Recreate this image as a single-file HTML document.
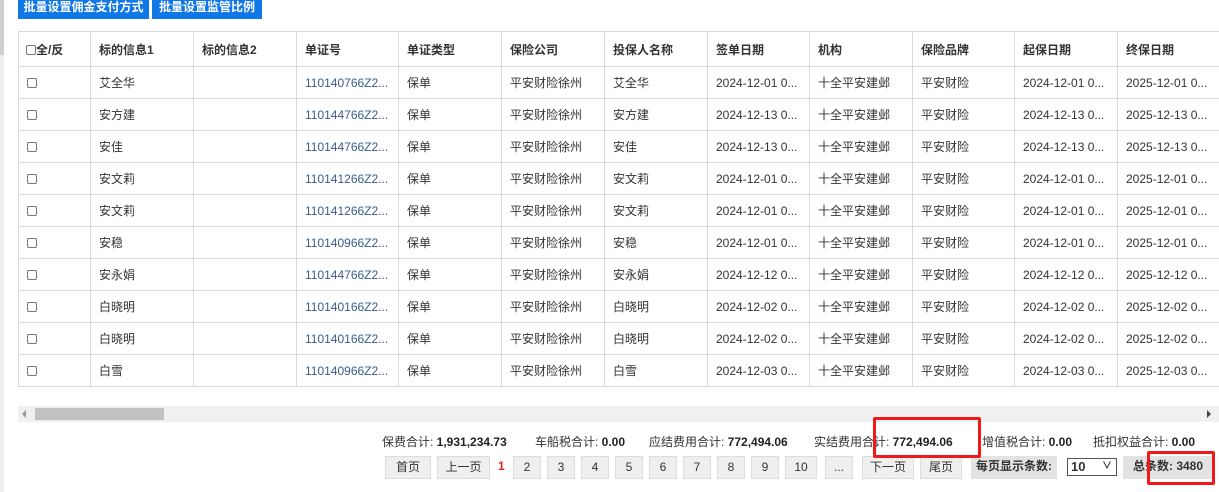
<!DOCTYPE html>
<html><head><meta charset="utf-8"><style>
*{box-sizing:border-box;margin:0;padding:0}
body{width:1219px;height:492px;overflow:hidden;background:#fff;font-family:"Liberation Sans","Noto Sans CJK SC",sans-serif;font-size:12px;color:#333;position:relative}
.lbar{position:absolute;left:0;top:0;width:4px;height:492px;background:#efefef}
.lbar2{position:absolute;left:0;top:0;width:4px;height:55px;background:#d0d0d0}
.btn{position:absolute;top:0;height:19px;background:#1177e6;color:#fff;font-size:12px;font-weight:bold;line-height:14px;text-align:center}
table{position:absolute;left:18px;top:31px;border-collapse:collapse;table-layout:fixed;width:1240px}
td,th{border:1px solid #d9d9d9;height:32px;padding:0 8px;white-space:nowrap;overflow:hidden;text-align:left;font-size:12px}
th{height:35px;font-weight:bold;color:#333}
td{color:#333}
td.l{color:#3a5a8c}
.cb{display:inline-block;width:10px;height:10px;border:1px solid #777;border-radius:2px;vertical-align:middle}
.sb{position:absolute;left:18px;top:406px;width:1201px;height:16px;background:#f0f0f0}
.th{position:absolute;left:35px;top:408px;width:129px;height:12px;background:#c1c1c1}
.sum{position:absolute;top:433px;font-size:12px;white-space:nowrap}
.sum b{color:#222}
.pb{position:absolute;top:456px;height:23px;background:#efefef;border:1px solid #ddd;font-size:12px;line-height:21px;text-align:center;color:#333}
.red{position:absolute;border:3px solid #f01818;border-radius:2px}
</style></head><body>
<div class="lbar"></div><div class="lbar2"></div>
<div class="btn" style="left:18px;width:131px">批量设置佣金支付方式</div>
<div class="btn" style="left:152px;width:110px">批量设置监管比例</div>
<table>
<colgroup><col style="width:72px"><col style="width:103px"><col style="width:103px"><col style="width:102px"><col style="width:103px"><col style="width:103px"><col style="width:103px"><col style="width:102px"><col style="width:103px"><col style="width:102px"><col style="width:103px"><col style="width:141px"></colgroup>
<tr><th style="padding:0 0 0 7px"><span class="cb"></span>全/反</th><th>标的信息1</th><th>标的信息2</th><th>单证号</th><th>单证类型</th><th>保险公司</th><th>投保人名称</th><th>签单日期</th><th>机构</th><th>保险品牌</th><th>起保日期</th><th>终保日期</th></tr>
<tr><td><span class="cb"></span></td><td>艾全华</td><td></td><td class="l">110140766Z2...</td><td>保单</td><td>平安财险徐州</td><td>艾全华</td><td>2024-12-01 0...</td><td>十全平安建邺</td><td>平安财险</td><td>2024-12-01 0...</td><td>2025-12-01 0...</td></tr>
<tr><td><span class="cb"></span></td><td>安方建</td><td></td><td class="l">110144766Z2...</td><td>保单</td><td>平安财险徐州</td><td>安方建</td><td>2024-12-13 0...</td><td>十全平安建邺</td><td>平安财险</td><td>2024-12-13 0...</td><td>2025-12-13 0...</td></tr>
<tr><td><span class="cb"></span></td><td>安佳</td><td></td><td class="l">110144766Z2...</td><td>保单</td><td>平安财险徐州</td><td>安佳</td><td>2024-12-13 0...</td><td>十全平安建邺</td><td>平安财险</td><td>2024-12-13 0...</td><td>2025-12-13 0...</td></tr>
<tr><td><span class="cb"></span></td><td>安文莉</td><td></td><td class="l">110141266Z2...</td><td>保单</td><td>平安财险徐州</td><td>安文莉</td><td>2024-12-01 0...</td><td>十全平安建邺</td><td>平安财险</td><td>2024-12-01 0...</td><td>2025-12-01 0...</td></tr>
<tr><td><span class="cb"></span></td><td>安文莉</td><td></td><td class="l">110141266Z2...</td><td>保单</td><td>平安财险徐州</td><td>安文莉</td><td>2024-12-01 0...</td><td>十全平安建邺</td><td>平安财险</td><td>2024-12-01 0...</td><td>2025-12-01 0...</td></tr>
<tr><td><span class="cb"></span></td><td>安稳</td><td></td><td class="l">110140966Z2...</td><td>保单</td><td>平安财险徐州</td><td>安稳</td><td>2024-12-01 0...</td><td>十全平安建邺</td><td>平安财险</td><td>2024-12-01 0...</td><td>2025-12-01 0...</td></tr>
<tr><td><span class="cb"></span></td><td>安永娟</td><td></td><td class="l">110144766Z2...</td><td>保单</td><td>平安财险徐州</td><td>安永娟</td><td>2024-12-12 0...</td><td>十全平安建邺</td><td>平安财险</td><td>2024-12-12 0...</td><td>2025-12-12 0...</td></tr>
<tr><td><span class="cb"></span></td><td>白晓明</td><td></td><td class="l">110140166Z2...</td><td>保单</td><td>平安财险徐州</td><td>白晓明</td><td>2024-12-02 0...</td><td>十全平安建邺</td><td>平安财险</td><td>2024-12-02 0...</td><td>2025-12-02 0...</td></tr>
<tr><td><span class="cb"></span></td><td>白晓明</td><td></td><td class="l">110140166Z2...</td><td>保单</td><td>平安财险徐州</td><td>白晓明</td><td>2024-12-02 0...</td><td>十全平安建邺</td><td>平安财险</td><td>2024-12-02 0...</td><td>2025-12-02 0...</td></tr>
<tr><td><span class="cb"></span></td><td>白雪</td><td></td><td class="l">110140966Z2...</td><td>保单</td><td>平安财险徐州</td><td>白雪</td><td>2024-12-03 0...</td><td>十全平安建邺</td><td>平安财险</td><td>2024-12-03 0...</td><td>2025-12-03 0...</td></tr>
</table>
<div class="sb"></div><div class="th"></div>
<div style="position:absolute;left:22px;top:410px;width:0;height:0;border-top:4px solid transparent;border-bottom:4px solid transparent;border-right:4px solid #999"></div>
<div style="position:absolute;left:1207px;top:410px;width:0;height:0;border-top:4px solid transparent;border-bottom:4px solid transparent;border-left:4px solid #444"></div>
<div class="sum" style="left:382px">保费合计: <b>1,931,234.73</b></div>
<div class="sum" style="left:535px">车船税合计: <b>0.00</b></div>
<div class="sum" style="left:649px">应结费用合计: <b>772,494.06</b></div>
<div class="sum" style="left:814px">实结费用合计: <b>772,494.06</b></div>
<div class="sum" style="left:982px">增值税合计: <b>0.00</b></div>
<div class="sum" style="left:1093px">抵扣权益合计: <b>0.00</b></div>
<div class="pb" style="left:385px;width:46px">首页</div>
<div class="pb" style="left:437px;width:53px">上一页</div>
<div style="position:absolute;left:498px;top:459px;color:#e02020;font-weight:bold">1</div>
<div class="pb" style="left:513px;width:28px">2</div>
<div class="pb" style="left:547px;width:28px">3</div>
<div class="pb" style="left:581px;width:28px">4</div>
<div class="pb" style="left:615px;width:28px">5</div>
<div class="pb" style="left:649px;width:28px">6</div>
<div class="pb" style="left:683px;width:28px">7</div>
<div class="pb" style="left:717px;width:28px">8</div>
<div class="pb" style="left:751px;width:28px">9</div>
<div class="pb" style="left:785px;width:32px">10</div>
<div class="pb" style="left:825px;width:28px">...</div>
<div class="pb" style="left:862px;width:52px">下一页</div>
<div class="pb" style="left:920px;width:42px">尾页</div>
<div class="pb" style="left:971px;width:86px;background:#e3e3e3;font-weight:bold;border:none">每页显示条数:</div>
<div style="position:absolute;left:1067px;top:458px;width:50px;height:18px;border:1px solid #555;font-size:13px;font-weight:bold;line-height:16px;padding-left:3px">10<span style="position:absolute;right:4px;top:0;font-size:10px">&#8744;</span></div>
<div class="pb" style="left:1123px;width:90px;background:#e3e3e3;font-weight:bold;border:none">总条数: 3480</div>
<div class="red" style="left:873px;top:417px;width:108px;height:41px"></div>
<div class="red" style="left:1147px;top:451px;width:68px;height:34px"></div>
</body></html>
